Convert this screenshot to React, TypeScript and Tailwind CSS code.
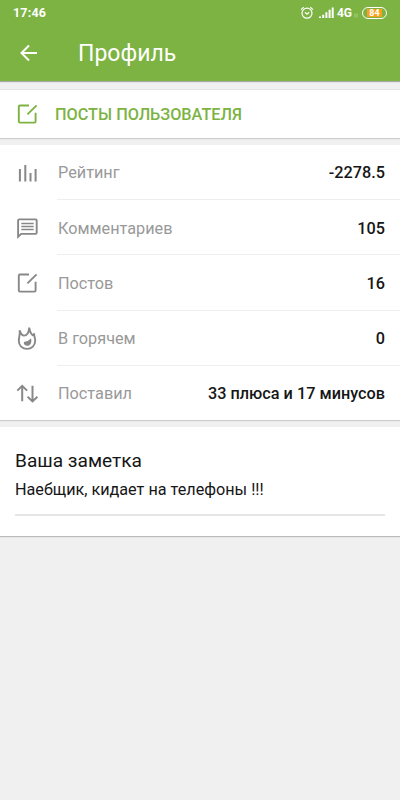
import type { ReactNode } from "react";

type Stat = {
  label: string;
  value: string;
  icon: ReactNode;
}

function EditIcon() {
  return (
    <svg className="w-6 h-6" viewBox="0 0 24 24" fill="none" stroke="currentColor" strokeWidth="1.9">
      <path d="M14 3.5H4.9Q3.8 3.5 3.8 4.6V19.5Q3.8 20.6 4.9 20.6H19.5Q20.6 20.6 20.6 19.5V10.8" />
      <path d="M12.4 12.4L21.6 3.4" />
    </svg>
  );
}

function RatingIcon() {
  return (
    <svg className="w-6 h-6" viewBox="0 0 24 24" fill="none" stroke="currentColor" strokeWidth="2">
      <path d="M4.9 8V20.6M10.3 4V20.6M15.5 12V20.6M20.6 8V20.6" />
    </svg>
  );
}

function CommentIcon() {
  return (
    <svg className="w-6 h-6" viewBox="0 0 24 24" fill="none" stroke="currentColor" strokeWidth="1.9">
      <path d="M3.1 20.8V4.5Q3.1 3.4 4.2 3.4H20.6Q21.7 3.4 21.7 4.5V16.8Q21.7 17.9 20.6 17.9H6.2L3.1 20.8Z" />
      <path strokeWidth="1.6" d="M6.3 7.5H18.7M6.3 10.5H18.7M6.3 13.5H18.7" />
    </svg>
  );
}

function FireIcon() {
  return (
    <svg className="w-6 h-6" viewBox="0 0 24 24" fill="none" stroke="currentColor" strokeWidth="1.9">
      <path strokeLinejoin="bevel" d="M4.6 4.2C5.4 6.4 6 9.6 9 9.6C12.6 9.6 13.9 5.6 14.2 1.6C14.8 5 16.2 8.4 18 9.4L19.2 7.4C18.8 9.8 20.2 11.8 20.2 14.8C20.2 19.4 16.6 22.9 12 22.9C7.3 22.9 3.8 19.4 3.8 15C3.8 11.2 5.4 8.4 4.6 4.2Z" />
      <path fill="currentColor" stroke="none" d="M16 12.4C17.2 16.3 15.5 19.8 12.2 19.8C10 19.8 8.6 18.3 8.8 16.3C10 14.8 11.4 15.6 12.8 14.9C14.2 14.2 14.7 12.8 16 12.4Z" />
    </svg>
  );
}

function VotesIcon() {
  return (
    <svg className="w-6 h-6" viewBox="0 0 24 24" fill="none" stroke="currentColor" strokeWidth="2">
      <path d="M7.2 20.3V5M2.3 9.6L7.2 4.9L12.1 9.6M17.5 4.8V20.3M12.6 15.8L17.5 20.4L22.4 15.8" />
    </svg>
  );
}

const stats: Stat[] = [
  { label: "Рейтинг", value: "-2278.5", icon: <RatingIcon /> },
  { label: "Комментариев", value: "105", icon: <CommentIcon /> },
  { label: "Постов", value: "16", icon: <EditIcon /> },
  { label: "В горячем", value: "0", icon: <FireIcon /> },
  { label: "Поставил", value: "33 плюса и 17 минусов", icon: <VotesIcon /> },
];

function StatusBar() {
  return (
    <div className="h-[25px] px-[13px] flex items-center text-white">
      <span className="text-[12.5px] leading-4 font-bold tracking-[0.2px]">17:46</span>
      <div className="ml-auto flex items-center">
        <svg className="w-[14px] h-[14px]" viewBox="0 0 14 14" fill="none" stroke="currentColor" strokeWidth="1.2">
          <circle cx="7" cy="7.2" r="5" />
          <path d="M4.9 6.3L7 8.1L9.2 6.3M1 3.6L3.7 1.3M10.3 1.3L13 3.6" />
        </svg>
        <svg className="ml-[5px] w-[15px] h-[12px]" viewBox="0 0 15 12" fill="currentColor">
          <path d="M0 9.5h2V11H0zM3.2 7.7h2V11h-2zM6.4 5.3h2V11h-2zM9.6 2.7h2V11h-2zM12.7 0.5h2V11h-2z" />
        </svg>
        <span className="ml-[3px] text-[12px] leading-4 font-bold">4G</span>
        <svg className="ml-[2px] w-[4px] h-[5px] mt-[5px] opacity-50" viewBox="0 0 5 5" stroke="currentColor" strokeWidth="0.9">
          <path d="M1.2 0V5M3.7 0V5" />
        </svg>
        <div className="ml-[4px] w-[25px] h-[12px] rounded-full border border-white p-px flex">
          <div className="flex-1 mx-[3px] pt-px bg-[#f9a11b] flex items-center justify-center text-[9px] leading-none font-bold">84</div>
        </div>
      </div>
    </div>
  );
}

export default function App() {
  return (
    <div className="w-full min-h-screen bg-[#f0f0f0] text-[#161616] font-[Roboto,sans-serif]">
      <header className="h-[81px] bg-[#7cb342] shadow-[0_1px_1px_#aaaaaa]">
        <StatusBar />
        <div className="h-14 flex items-center text-white">
          <svg className="ml-[17px] w-6 h-6" viewBox="0 0 24 24" fill="none" stroke="currentColor" strokeWidth="2">
            <path d="M20 12H5M12 4.5L4.5 12L12 19.5" />
          </svg>
          <h1 className="ml-[37px] pt-[2px] text-[23px] leading-8">Профиль</h1>
        </div>
      </header>

      <button className="mt-[9px] w-full h-[48px] pl-[15px] flex items-center bg-white text-[#7cb342] shadow-[0_1px_1px_#cccccc,0_-1px_0_#e6e6e6]">
        <EditIcon />
        <span className="ml-4 pt-[2px] text-[16.25px] font-medium">ПОСТЫ ПОЛЬЗОВАТЕЛЯ</span>
      </button>

      <section className="mt-[7px] h-[275px] pl-[15px] bg-white shadow-[0_1px_1px_#cccccc]">
        {stats.map((stat) => (
          <div key={stat.label} className="group h-[55.2px] flex items-center">
            <div className="text-[#888888]">{stat.icon}</div>
            <div className="ml-[18px] flex-1 h-full pl-px pt-[3px] pr-[15px] flex items-center justify-between border-b border-[#eeeeee] group-last:border-0 group-last:pt-[2px]">
              <span className="text-[16.25px] text-[#999999]">{stat.label}</span>
              <span className="text-[16.25px] font-medium">{stat.value}</span>
            </div>
          </div>
        ))}
      </section>

      <section className="mt-[7px] h-[109px] px-[15px] pt-5 bg-white shadow-[0_1px_1px_#bbbbbb]">
        <h2 className="text-[19.1px] leading-7">Ваша заметка</h2>
        <div className="h-[41px] border-b-2 border-[#e6e6e6] pt-[3px] text-[16.2px] leading-6">Наебщик, кидает на телефоны !!!</div>
      </section>
    </div>
  );
}
